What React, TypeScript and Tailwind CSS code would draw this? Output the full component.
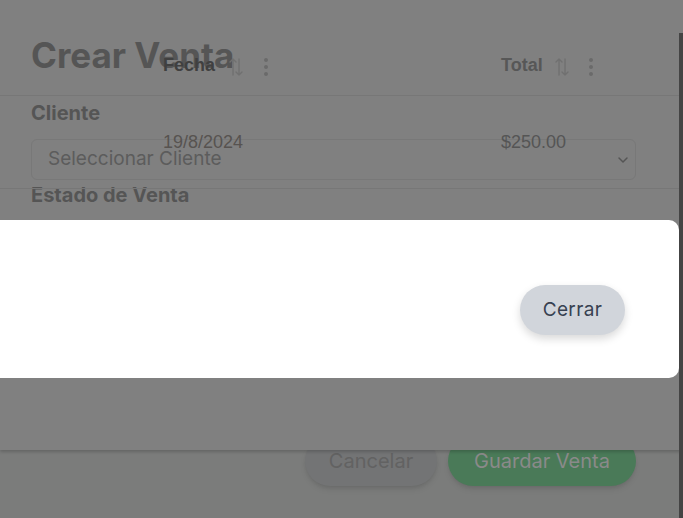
import React from 'react';

const SortIcon = () => (
  <svg width="14" height="20" viewBox="0 0 14 20" fill="none" className="mt-1">
    <path d="M4 18V2M1 5l3-3 3 3" stroke="#707070" strokeWidth="1.4" strokeLinecap="round" strokeLinejoin="round" />
    <path d="M10 2v16M7 15l3 3 3-3" stroke="#707070" strokeWidth="1.4" strokeLinecap="round" strokeLinejoin="round" />
  </svg>
);

const Dots = () => (
  <div className="mt-1 flex flex-col items-center gap-[3px]">
    <span className="h-[4px] w-[4px] rounded-full bg-[#6a6a6a]" />
    <span className="h-[4px] w-[4px] rounded-full bg-[#6a6a6a]" />
    <span className="h-[4px] w-[4px] rounded-full bg-[#6a6a6a]" />
  </div>
);

const App = () => {
  return (
    <div className="relative h-[518px] w-[683px] overflow-hidden bg-[#7b7c7b] font-['Inter',sans-serif]">
      {/* footer of the sale form, mostly hidden */}
      <div className="flex justify-end gap-[11px] pr-[47px] pt-[436px]">
        <button className="h-[50px] w-[132px] rounded-full bg-[#737475] text-[20px] text-[#626262] shadow-md">
          Cancelar
        </button>
        <button className="h-[50px] w-[188px] rounded-full bg-[#4a7a58] text-[20px] text-[#8a8a8a] shadow-md">
          Guardar Venta
        </button>
      </div>

      {/* sale form panel */}
      <div className="absolute inset-x-0 top-0 h-[450px] bg-[#808080] px-[31px] pt-[35px] shadow-[0_2px_3px_rgba(0,0,0,0.18)]">
        <h2 className="text-[35px] font-bold leading-[40px] text-[#555]">Crear Venta</h2>
        <label className="mt-6 block text-[20px] font-bold leading-[28px] text-[#555]">Cliente</label>
        <div className="mt-3 flex h-[41px] w-[605px] items-center justify-between rounded-md border border-[#787878] pl-4 pr-[6px]">
          <span className="text-[19px] text-[#5c5c5c]">Seleccionar Cliente</span>
          <svg width="12" height="8" viewBox="0 0 12 8" fill="none">
            <path d="M2 2l4 4 4-4" stroke="#555" strokeWidth="1.5" strokeLinecap="round" strokeLinejoin="round" />
          </svg>
        </div>
        <label className="mt-px block text-[20px] font-bold leading-[28px] text-[#555]">Estado de Venta</label>
      </div>

      {/* sales table bleeding through */}
      <div className="absolute inset-x-0 top-[34px] font-['Liberation_Sans',Arial,sans-serif]">
        <div className="flex h-[62px] items-center border-b border-[#777] pl-[163px]">
          <div className="flex w-[338px] items-center">
            <span className="text-[18px] font-bold leading-6 text-[#404040]">Fecha</span>
            <span className="ml-[14px]"><SortIcon /></span>
            <span className="ml-[21px]"><Dots /></span>
          </div>
          <div className="flex items-center">
            <span className="text-[18px] font-bold leading-6 text-[#575757]">Total</span>
            <span className="ml-3"><SortIcon /></span>
            <span className="ml-5"><Dots /></span>
          </div>
        </div>
        <div className="flex h-[93px] items-center border-b border-[#777] pl-[163px]">
          <span className="w-[338px] text-[18px] leading-6 text-[#575350]">19/8/2024</span>
          <span className="text-[18px] leading-6 text-[#555]">$250.00</span>
        </div>
      </div>

      {/* scrollbar edge */}
      <div className="absolute bottom-0 right-0 top-[33px] w-[4px] bg-[#444]" />

      {/* confirmation dialog */}
      <div className="absolute left-[-30px] right-[4px] top-[220px] flex h-[158px] justify-end rounded-[10px] bg-white pr-[54px] pt-[65px]">
        <button className="h-[50px] w-[105px] rounded-full bg-[#d1d5db] text-[19px] tracking-[0.02em] text-[#374151] shadow-[0_4px_8px_rgba(0,0,0,0.15)]">
          Cerrar
        </button>
      </div>
    </div>
  );
};

export default App;
